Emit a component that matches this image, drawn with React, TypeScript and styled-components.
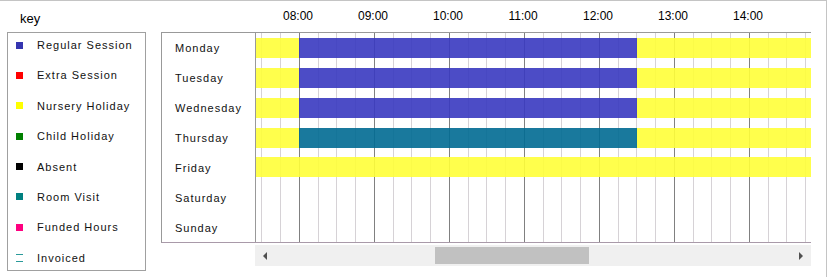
import styled, { createGlobalStyle } from "styled-components";

const GlobalStyle = createGlobalStyle`
  body {
    margin: 0;
    background: #fff;
    font-family: "Liberation Sans", Arial, sans-serif;
  }
`;

// timeline geometry
const PX_PER_HOUR = 75;
const VIEW_START = 8 - 43 / PX_PER_HOUR;
const VIEW_WIDTH = 555;
const VIEW_END = VIEW_START + VIEW_WIDTH / PX_PER_HOUR;

const colors: Record<string, string> = {
  regular: "rgba(56, 56, 192, 0.9)",
  extra: "#ff0000",
  nursery: "rgba(255, 255, 56, 0.9)",
  child: "#008000",
  absent: "#000000",
  room: "rgba(0, 106, 146, 0.9)",
  funded: "#ff0080",
};

const legend = [
  { label: "Regular Session", color: "#3535b0" },
  { label: "Extra Session", color: "#ff0000" },
  { label: "Nursery Holiday", color: "#ffff00" },
  { label: "Child Holiday", color: "#008000" },
  { label: "Absent", color: "#000000" },
  { label: "Room Visit", color: "#008080" },
  { label: "Funded Hours", color: "#ff0080" },
  { label: "Invoiced", color: "", invoiced: true },
];

type Seg = { from: number; to: number; kind: string };

const morning = (kind: string): Seg[] => [
  { from: VIEW_START, to: 8, kind: "nursery" },
  { from: 8, to: 12.5, kind },
  { from: 12.5, to: VIEW_END, kind: "nursery" },
];

const days: { name: string; segs: Seg[] }[] = [
  { name: "Monday", segs: morning("regular") },
  { name: "Tuesday", segs: morning("regular") },
  { name: "Wednesday", segs: morning("regular") },
  { name: "Thursday", segs: morning("room") },
  { name: "Friday", segs: [{ from: VIEW_START, to: VIEW_END, kind: "nursery" }] },
  { name: "Saturday", segs: [] },
  { name: "Sunday", segs: [] },
];

const hours = ["08:00", "09:00", "10:00", "11:00", "12:00", "13:00", "14:00"];

const Frame = styled.div`
  width: 826px;
  height: 276px;
  border-top: 1px solid #c4c4c4;
  border-right: 1px solid #c4c4c4;
  border-bottom: 1px solid #c4c4c4;
  display: flex;
  box-sizing: content-box;
`;

const KeyColumn = styled.div`
  padding-left: 7px;
  width: 139px;
  display: flex;
  flex-direction: column;
`;

const KeyTitle = styled.div`
  height: 31px;
  padding-left: 13px;
  line-height: 35px;
  font-size: 13px;
  color: #000;
`;

const KeyBox = styled.div`
  border: 1px solid #a0a0a0;
  height: 239px;
  display: flex;
  flex-direction: column;
  padding-top: 6px;
  box-sizing: border-box;
`;

const KeyItem = styled.div`
  display: flex;
  align-items: center;
  height: 12px;
  margin-bottom: 18.4px;
  padding-left: 8px;
  font-size: 11px;
  letter-spacing: 1px;
  color: #111;
`;

const Swatch = styled.span<{ $color: string }>`
  width: 7px;
  height: 7px;
  background: ${(p) => p.$color};
  margin-right: 14px;
  flex: none;
`;

const InvoicedMark = styled.span`
  width: 7px;
  height: 8px;
  border-top: 1px solid #2a9a9a;
  border-bottom: 1px solid #2a9a9a;
  box-sizing: border-box;
  margin-right: 14px;
  flex: none;
`;

const Planner = styled.div`
  margin-left: 15px;
  display: flex;
  flex-direction: column;
`;

const Header = styled.div`
  height: 31px;
  display: flex;
  padding-left: ${94 + 5.5}px;
`;

const HourLabel = styled.div`
  width: ${PX_PER_HOUR}px;
  flex: none;
  text-align: center;
  font-size: 12px;
  line-height: 31px;
  color: #000;
`;

const Grid = styled.div`
  display: flex;
  border-top: 1px solid #999;
  border-left: 1px solid #999;
  border-bottom: 1px solid #a99aa9;
  height: 209px;
`;

const DayColumn = styled.div`
  width: 93px;
  border-right: 1px solid #999;
  display: flex;
  flex-direction: column;
`;

const DayName = styled.div`
  height: 30px;
  line-height: 30px;
  padding-left: 13px;
  font-size: 11px;
  letter-spacing: 1px;
  color: #111;
`;

const Q = PX_PER_HOUR / 4;

const Timeline = styled.div`
  width: ${VIEW_WIDTH}px;
  display: flex;
  flex-direction: column;
  background-image:
    linear-gradient(to right, #808080 0 1px, transparent 1px),
    linear-gradient(
      to right,
      transparent ${Q}px,
      #d6d2d6 ${Q}px ${Q + 1}px,
      transparent ${Q + 1}px ${2 * Q}px,
      #d6d2d6 ${2 * Q}px ${2 * Q + 1}px,
      transparent ${2 * Q + 1}px ${3 * Q}px,
      #d6d2d6 ${3 * Q}px ${3 * Q + 1}px,
      transparent ${3 * Q + 1}px
    );
  background-size: ${PX_PER_HOUR}px 100%, ${PX_PER_HOUR}px 100%;
  background-position: 43px 0, 43px 0;
  background-repeat: repeat-x;
`;

const DayRow = styled.div`
  height: 30px;
  display: flex;
  align-items: flex-start;
  padding-top: 5px;
  box-sizing: border-box;
`;

const Bar = styled.div<{ $kind: string }>`
  height: 20px;
  flex: none;
  background: ${(p) => colors[p.$kind]};
`;

const Scrollbar = styled.div`
  margin-top: 2px;
  margin-left: 94px;
  width: ${VIEW_WIDTH + 1}px;
  height: 21px;
  background: #f0f0f0;
  display: flex;
  align-items: center;
  padding: 0 8px;
  box-sizing: border-box;
`;

const Arrow = styled.span<{ $dir: "left" | "right" }>`
  width: 0;
  height: 0;
  border-top: 4.5px solid transparent;
  border-bottom: 4.5px solid transparent;
  ${(p) =>
    p.$dir === "left"
      ? "border-right: 4px solid #505050;"
      : "border-left: 4px solid #505050;"}
`;

const Track = styled.div`
  flex: 1;
  height: 17px;
  display: flex;
  padding-left: 168px;
`;

const Thumb = styled.div`
  width: 154px;
  height: 17px;
  background: #c1c1c1;
`;

export default function App() {
  return (
    <>
      <GlobalStyle />
      <Frame>
        <KeyColumn>
          <KeyTitle>key</KeyTitle>
          <KeyBox>
            {legend.map((item) => (
              <KeyItem key={item.label}>
                {item.invoiced ? <InvoicedMark /> : <Swatch $color={item.color} />}
                {item.label}
              </KeyItem>
            ))}
          </KeyBox>
        </KeyColumn>
        <Planner>
          <Header>
            {hours.map((h) => (
              <HourLabel key={h}>{h}</HourLabel>
            ))}
          </Header>
          <Grid>
            <DayColumn>
              {days.map((d) => (
                <DayName key={d.name}>{d.name}</DayName>
              ))}
            </DayColumn>
            <Timeline>
              {days.map((d) => (
                <DayRow key={d.name}>
                  {d.segs.map((s, i) => (
                    <Bar
                      key={i}
                      $kind={s.kind}
                      style={{ width: (s.to - s.from) * PX_PER_HOUR }}
                    />
                  ))}
                </DayRow>
              ))}
            </Timeline>
          </Grid>
          <Scrollbar>
            <Arrow $dir="left" />
            <Track>
              <Thumb />
            </Track>
            <Arrow $dir="right" />
          </Scrollbar>
        </Planner>
      </Frame>
    </>
  );
}
